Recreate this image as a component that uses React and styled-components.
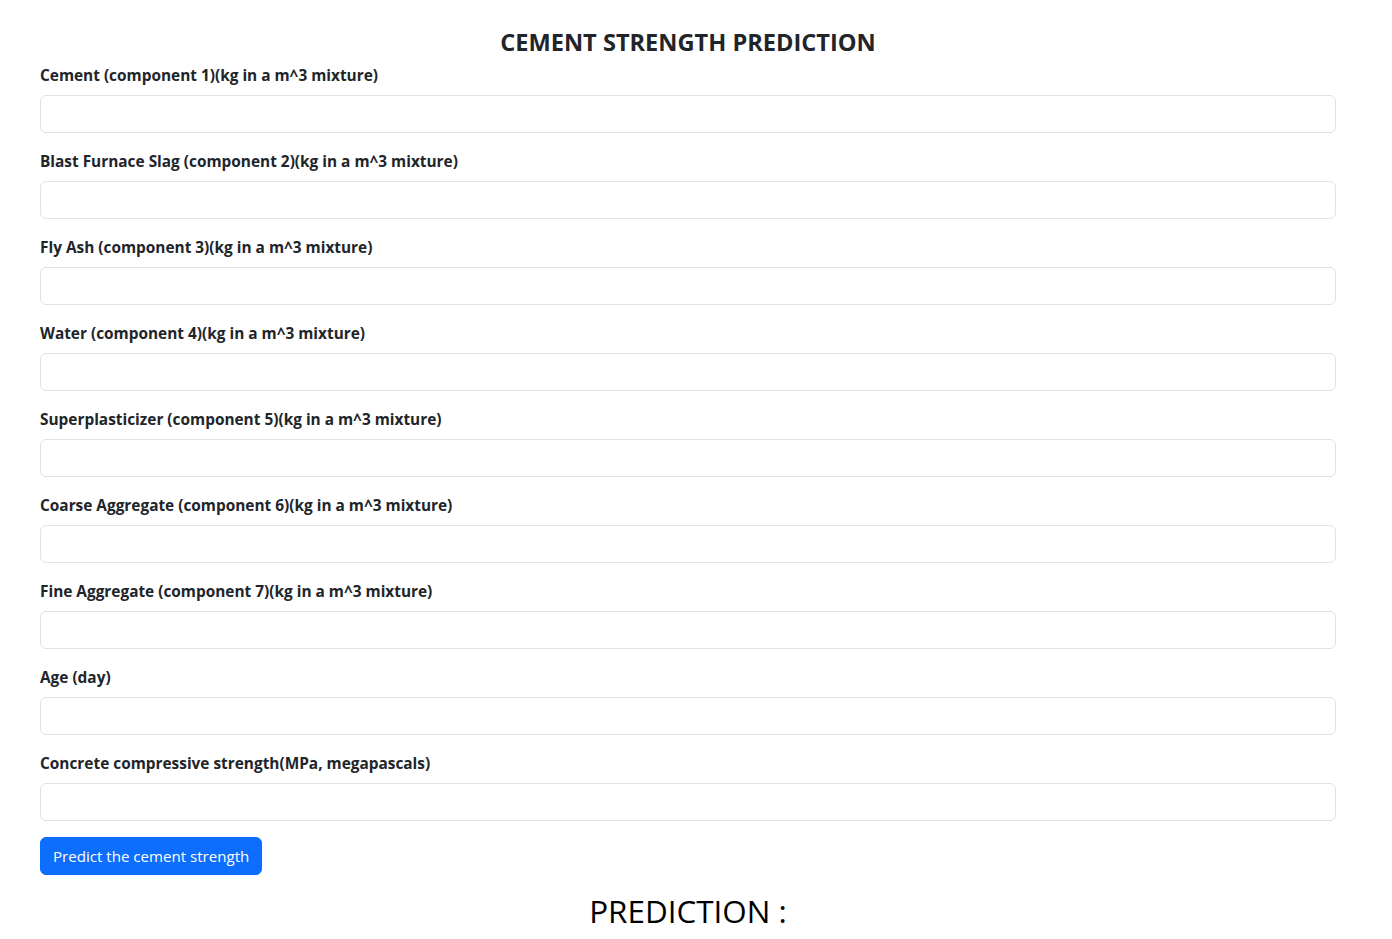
import React from 'react'
import styled, { createGlobalStyle } from 'styled-components'

const GlobalStyle = createGlobalStyle`
  * { box-sizing: border-box; }
  body {
    margin: 0;
    background: #fff;
    color: #212529;
    font-family: "Open Sans", "Noto Sans", sans-serif;
    font-size: 16px;
    line-height: 1.5;
  }
`

const Container = styled.div`
  width: 1296px;
  margin: 0 40px;
  padding-top: 28px;
`

const Title = styled.h4`
  margin: 0 0 7px;
  text-align: center;
  font-size: 23.6px;
  font-weight: 700;
  line-height: 28px;
`

const Field = styled.div`
  margin-bottom: 16px;
`

const Label = styled.label`
  display: block;
  margin-bottom: 8px;
  padding-top: 1px;
  font-size: 15.4px;
  font-weight: 700;
  line-height: 23px;
`

const Input = styled.input`
  display: block;
  width: 100%;
  height: 38px;
  padding: 6px 12px;
  border: 1px solid #dee2e6;
  border-radius: 6px;
  font: inherit;
  background: #fff;
`

const Button = styled.button`
  display: inline-block;
  height: 38px;
  padding: 6px 12px;
  border: 1px solid #0d6efd;
  border-radius: 6px;
  background: #0d6efd;
  color: #fff;
  font-family: inherit;
  font-size: 15.1px;
  line-height: 24px;
`

const Result = styled.h2`
  margin: 17px 0 0;
  text-align: center;
  font-size: 31.4px;
  font-weight: 500;
  line-height: 38px;
  color: #000;
`

const fields = [
  'Cement (component 1)(kg in a m^3 mixture)',
  'Blast Furnace Slag (component 2)(kg in a m^3 mixture)',
  'Fly Ash (component 3)(kg in a m^3 mixture)',
  'Water (component 4)(kg in a m^3 mixture)',
  'Superplasticizer (component 5)(kg in a m^3 mixture)',
  'Coarse Aggregate (component 6)(kg in a m^3 mixture)',
  'Fine Aggregate (component 7)(kg in a m^3 mixture)',
  'Age (day)',
  'Concrete compressive strength(MPa, megapascals)',
]

export default function App() {
  return (
    <>
      <GlobalStyle />
      <Container>
        <Title>CEMENT STRENGTH PREDICTION</Title>
        <form onSubmit={e => e.preventDefault()}>
          {fields.map((f, i) => (
            <Field key={i}>
              <Label htmlFor={'f' + i}>{f}</Label>
              <Input id={'f' + i} type="text" />
            </Field>
          ))}
          <Button type="submit">Predict the cement strength</Button>
        </form>
        <Result>PREDICTION :</Result>
      </Container>
    </>
  )
}
